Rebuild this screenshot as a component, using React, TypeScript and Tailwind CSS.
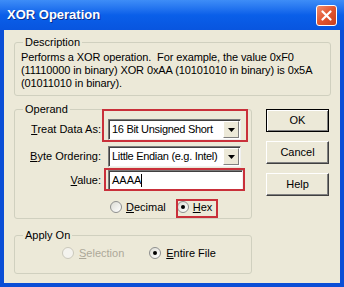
import React from "react";

const font = { fontFamily: '"Liberation Sans", Arial, sans-serif' };

const Radio = ({ checked, disabled }: { checked?: boolean; disabled?: boolean }) => (
  <span
    className={
      "relative inline-flex w-[12px] h-[12px] rounded-full border items-center justify-center " +
      (disabled
        ? "border-[#CAC8BB] bg-[#F4F3EE]"
        : "border-[#8E8F8F] bg-gradient-to-br from-[#DCDCD4] to-white")
    }
  >
    {checked && <span className="w-[4px] h-[4px] rounded-full bg-black" />}
  </span>
);

const Combo = ({ value }: { value: string }) => (
  <div className="flex items-center w-[133px] h-[21px] bg-white border border-t-[#7A7A7A] border-l-[#7A7A7A] border-b-[#F0F0F0] border-r-[#F0F0F0] shadow-[inset_1px_1px_0_#404040]">
    <span className="flex-1 pl-[3px] whitespace-nowrap overflow-hidden tracking-[-0.3px]">{value}</span>
    <span className="flex items-center justify-center w-[16px] h-[17px] mr-[1px] bg-[#ECE9D8] border border-t-white border-l-white border-b-[#808080] border-r-[#808080]">
      <svg width="7" height="4" viewBox="0 0 7 4">
        <path d="M0 0h7L3.5 4z" fill="#000" />
      </svg>
    </span>
  </div>
);

const Btn = ({ label, def }: { label: string; def?: boolean }) => (
  <button
    className={
      "w-[63px] h-[23px] text-[11px] text-black bg-[#ECE9D8] " +
      (def
        ? "border border-black shadow-[inset_1px_1px_0_#fff,inset_-1px_-1px_0_#808080]"
        : "border border-t-white border-l-white border-b-[#404040] border-r-[#404040] shadow-[inset_-1px_-1px_0_#808080]")
    }
  >
    {label}
  </button>
);

export default function App() {
  return (
    <div
      className="relative w-[344px] h-[287px] flex flex-col bg-[#0A4ED6] overflow-hidden text-[11px] text-black"
      style={font}
    >
      {/* Title bar */}
      <div className="flex items-center justify-between h-[30px] pl-[7px] pr-[7px] bg-gradient-to-b from-[#3E8DF7] via-[#0A5FE9] to-[#0855DF]">
        <span className="text-white font-bold text-[13px] [text-shadow:1px_1px_0_#0A2E8C]">
          XOR Operation
        </span>
        <span className="flex items-center justify-center w-[21px] h-[21px] rounded-[3px] border border-white bg-gradient-to-br from-[#F08B6A] via-[#E2552F] to-[#C8401E]">
          <svg width="11" height="11" viewBox="0 0 11 11">
            <path d="M1.5 1.5l8 8M9.5 1.5l-8 8" stroke="#fff" strokeWidth="2.2" strokeLinecap="round" />
          </svg>
        </span>
      </div>

      {/* Body */}
      <div className="flex-1 mx-[4px] mb-[4px] bg-[#ECE9D8] pl-[10px] pr-[9px] pt-[6px]">
        <fieldset className="border border-[#D0D0BF] rounded-[3px] h-[60px] pl-[6px] pr-[2px]">
          <legend className="ml-[2px] px-[2px] leading-[13px]">Description</legend>
          <p className="leading-[13px] mt-[2px] whitespace-nowrap tracking-[-0.1px]">
            Performs a XOR operation.&nbsp; For example, the value 0xF0
            <br />
            (11110000 in binary) XOR 0xAA (10101010 in binary) is 0x5A
            <br />
            (01011010 in binary).
          </p>
        </fieldset>

        <div className="flex mt-[7px]">
          <div className="flex flex-col w-[238px]">
            <fieldset className="border border-[#D0D0BF] rounded-[3px] h-[116px]">
              <legend className="ml-[8px] px-[2px] leading-[13px]">Operand</legend>
              <div className="grid grid-cols-[86px_auto] gap-x-[7px] items-center mt-[3px]">
                <span className="text-right">
                  <u>T</u>reat Data As:
                </span>
                <Combo value="16 Bit Unsigned Short" />
                <span className="text-right mt-[6px]">
                  <u>B</u>yte Ordering:
                </span>
                <div className="mt-[6px]">
                  <Combo value="Little Endian (e.g. Intel)" />
                </div>
                <span className="text-right mt-[3px]">
                  <u>V</u>alue:
                </span>
                <div className="mt-[3px] flex items-center w-[135px] h-[20px] bg-white border border-t-[#7A7A7A] border-l-[#7A7A7A] border-b-[#F0F0F0] border-r-[#F0F0F0] shadow-[inset_1px_1px_0_#404040] pl-[3px]">
                  <span>AAAA</span>
                  <span className="w-px h-[13px] bg-black" />
                </div>
              </div>
              <div className="flex items-center mt-[10px] pl-[95px] h-[14px]">
                <Radio />
                <span className="ml-[4px]">
                  <u>D</u>ecimal
                </span>
                <span className="ml-[11px] flex items-center">
                  <Radio checked />
                  <span className="ml-[4px]">
                    <u>H</u>ex
                  </span>
                </span>
              </div>
            </fieldset>

            <fieldset className="mt-[10px] border border-[#D0D0BF] rounded-[3px] h-[45px]">
              <legend className="ml-[8px] px-[2px] leading-[13px]">Apply On</legend>
              <div className="flex items-center pl-[47px] mt-[4px] h-[14px]">
                <Radio disabled />
                <span className="ml-[5px] text-[#ACA899]">
                  <u>S</u>election
                </span>
                <span className="ml-[25px] flex items-center">
                  <Radio checked />
                  <span className="ml-[5px]">
                    <u>E</u>ntire File
                  </span>
                </span>
              </div>
            </fieldset>
          </div>

          <div className="flex flex-col ml-[14px] pt-[6px] gap-[9px]">
            <Btn label="OK" def />
            <Btn label="Cancel" />
            <Btn label="Help" />
          </div>
        </div>
      </div>

      {/* Red annotation boxes */}
      <div className="absolute left-[102px] top-[109px] w-[146px] h-[33px] border-2 border-[#C9303A]" />
      <div className="absolute left-[104px] top-[168px] w-[141px] h-[23px] border-2 border-[#C9303A]" />
      <div className="absolute left-[176px] top-[199px] w-[42px] h-[19px] border-2 border-[#C9303A]" />
    </div>
  );
}
